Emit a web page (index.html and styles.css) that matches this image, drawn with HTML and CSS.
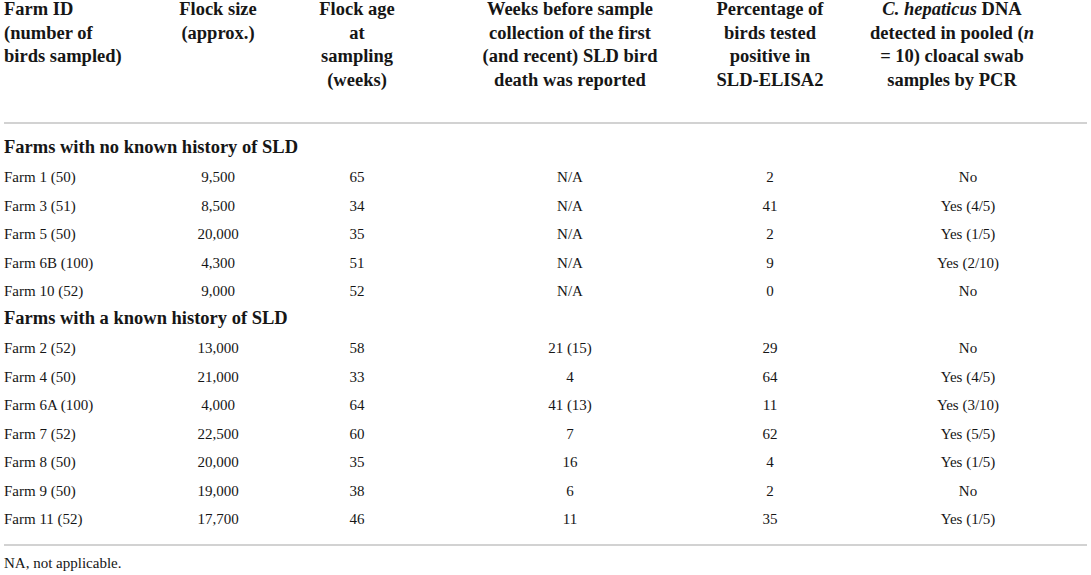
FILE: index.html
```html
<!DOCTYPE html>
<html lang="en">
<head>
<meta charset="utf-8">
<title>Table</title>
<link rel="stylesheet" href="styles.css">
</head>
<body>
<div class="wrap">
<table class="data">
  <colgroup>
    <col class="c1"><col class="c2"><col class="c3"><col class="c4"><col class="c5"><col class="c6">
  </colgroup>
  <thead>
    <tr>
      <th class="left">Farm ID<br>(number of<br>birds sampled)</th>
      <th>Flock size<br>(approx.)</th>
      <th>Flock age<br>at<br>sampling<br>(weeks)</th>
      <th>Weeks before sample<br>collection of the first<br>(and recent) SLD bird<br>death was reported</th>
      <th>Percentage of<br>birds tested<br>positive in<br>SLD-ELISA2</th>
      <th class="last"><i>C. hepaticus</i> DNA<br>detected in pooled (<i>n</i><br>= 10) cloacal swab<br>samples by PCR</th>
    </tr>
  </thead>
  <tbody>
    <tr class="section first"><td colspan="6">Farms with no known history of SLD</td></tr>
    <tr><td>Farm 1 (50)</td><td>9,500</td><td>65</td><td>N/A</td><td>2</td><td class="last">No</td></tr>
    <tr><td>Farm 3 (51)</td><td>8,500</td><td>34</td><td>N/A</td><td>41</td><td class="last">Yes (4/5)</td></tr>
    <tr><td>Farm 5 (50)</td><td>20,000</td><td>35</td><td>N/A</td><td>2</td><td class="last">Yes (1/5)</td></tr>
    <tr><td>Farm 6B (100)</td><td>4,300</td><td>51</td><td>N/A</td><td>9</td><td class="last">Yes (2/10)</td></tr>
    <tr><td>Farm 10 (52)</td><td>9,000</td><td>52</td><td>N/A</td><td>0</td><td class="last">No</td></tr>
    <tr class="section"><td colspan="6">Farms with a known history of SLD</td></tr>
    <tr><td>Farm 2 (52)</td><td>13,000</td><td>58</td><td>21 (15)</td><td>29</td><td class="last">No</td></tr>
    <tr><td>Farm 4 (50)</td><td>21,000</td><td>33</td><td>4</td><td>64</td><td class="last">Yes (4/5)</td></tr>
    <tr><td>Farm 6A (100)</td><td>4,000</td><td>64</td><td>41 (13)</td><td>11</td><td class="last">Yes (3/10)</td></tr>
    <tr><td>Farm 7 (52)</td><td>22,500</td><td>60</td><td>7</td><td>62</td><td class="last">Yes (5/5)</td></tr>
    <tr><td>Farm 8 (50)</td><td>20,000</td><td>35</td><td>16</td><td>4</td><td class="last">Yes (1/5)</td></tr>
    <tr><td>Farm 9 (50)</td><td>19,000</td><td>38</td><td>6</td><td>2</td><td class="last">No</td></tr>
    <tr class="end"><td>Farm 11 (52)</td><td>17,700</td><td>46</td><td>11</td><td>35</td><td class="last">Yes (1/5)</td></tr>
  </tbody>
</table>
<p class="note">NA, not applicable.</p>
</div>
</body>
</html>
```

FILE: styles.css
```css
html, body {
  margin: 0;
  padding: 0;
  background: #ffffff;
}

body {
  font-family: "Liberation Serif", "Times New Roman", serif;
  color: #161616;
}

.wrap {
  padding-left: 4px;
  width: 1083px;
}

.data {
  width: 1083px;
  table-layout: fixed;
  border-collapse: separate;
  border-spacing: 0;
  margin-top: -2px;
}

.c1 { width: 156px; }
.c2 { width: 116px; }
.c3 { width: 162px; }
.c4 { width: 264px; }
.c5 { width: 136px; }
.c6 { width: 249px; }

.data th {
  font-size: 18.5px;
  font-weight: bold;
  line-height: 23.5px;
  text-align: center;
  vertical-align: top;
  padding: 0 0 30px 0;
  border-bottom: 2px solid #d2d2d2;
  white-space: nowrap;
}

.data th.left {
  text-align: left;
}

.data th.last {
  padding-right: 21px;
}

.data td {
  font-size: 15px;
  line-height: 28.5px;
  padding: 0;
  text-align: center;
  white-space: nowrap;
}

.data td:first-child {
  text-align: left;
}

.data td.last {
  padding-left: 11px;
}

.data tr.section td {
  font-size: 18.5px;
  font-weight: bold;
  line-height: 24.5px;
  padding-bottom: 4px;
  text-align: left;
}

.data tr.section.first td {
  padding-top: 10.5px;
}

.data tr.end td {
  padding-bottom: 10px;
  border-bottom: 2px solid #d2d2d2;
}

.note {
  margin: 8px 0 0 0;
  font-size: 15px;
  line-height: 19px;
}
```
